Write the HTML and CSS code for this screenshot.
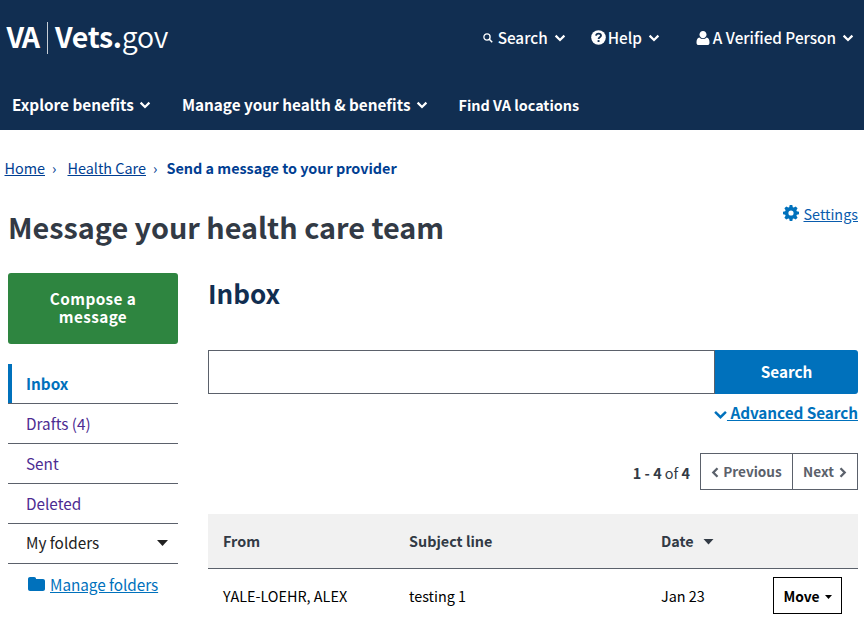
FILE: index.html
```html
<!DOCTYPE html>
<html lang="en">
<head>
<meta charset="utf-8">
<title>Message your health care team | Vets.gov</title>
<link rel="stylesheet" href="styles.css">
</head>
<body>
<svg class="defs" width="0" height="0">
  <symbol id="chevron" viewBox="0 0 12 8"><path d="M1.600 1.600 6 6l4.400-4.400" fill="none" stroke="currentColor" stroke-width="2.200"/></symbol>
</svg>
<header class="header">
  <div class="header-top">
    <a class="logo"><span class="logo-va">VA</span><span class="logo-vets">Vets.</span><span class="logo-gov">gov</span></a>
    <div class="tools">
      <a class="tool tool-search"><svg class="icon-search" viewBox="0 0 10 10"><circle cx="4" cy="4" r="3.100" fill="none" stroke="currentColor" stroke-width="1.300"/><path d="m6.300 6.300 2.900 2.900" stroke="currentColor" stroke-width="1.600"/></svg><span>Search</span><svg class="chev"><use href="#chevron"/></svg></a>
      <a class="tool tool-help"><svg class="icon-help" viewBox="0 0 15 15"><circle cx="7.500" cy="7.500" r="7.300" fill="currentColor"/><path d="M5 5.700C5.200 4.300 6.200 3.600 7.500 3.600c1.500 0 2.500.8 2.500 2 0 1.700-2.400 1.700-2.400 3.400" fill="none" stroke="#112e51" stroke-width="1.900"/><path d="M6.600 10.100h1.900v1.900H6.600z" fill="#112e51"/></svg><span>Help</span><svg class="chev"><use href="#chevron"/></svg></a>
      <a class="tool tool-user"><svg class="icon-user" viewBox="0 0 13 14"><path d="M6.500 0C8.500 0 10 1.600 10 3.600S8.500 7.300 6.500 7.300 3 5.600 3 3.600 4.500 0 6.500 0z" fill="currentColor"/><path d="M3 6.400c1 1 2.200 1.600 3.500 1.600S9 7.400 10 6.400c2.300.2 3 2.600 3 5.300 0 1.400-.9 2.300-2.200 2.300H2.200C.9 14 0 13.100 0 11.700 0 9 .7 6.600 3 6.400z" fill="currentColor"/></svg><span>A Verified Person</span><svg class="chev"><use href="#chevron"/></svg></a>
    </div>
  </div>
  <nav class="main-nav">
    <a class="nav-a"><span>Explore benefits</span><svg class="chev"><use href="#chevron"/></svg></a>
    <a class="nav-b"><span>Manage your health &amp; benefits</span><svg class="chev"><use href="#chevron"/></svg></a>
    <a class="nav-c"><span>Find VA locations</span></a>
  </nav>
</header>
<nav class="breadcrumb">
  <a class="crumb">Home</a><span class="sep">›</span><a class="crumb crumb-two">Health Care</a><span class="sep">›</span><strong class="crumb-now">Send a message to your provider</strong>
</nav>
<main>
  <div class="title-row">
    <h1>Message your health care team</h1>
    <a class="settings"><svg viewBox="0 0 16 16"><path d="M6.700 0h2.600l.5 2.200 1 .4 1.900-1.200 1.900 1.900-1.200 1.900.4 1 2.200.5v2.600l-2.200.5-.4 1 1.200 1.900-1.900 1.900-1.900-1.200-1 .4-.5 2.200H6.700l-.5-2.200-1-.4-1.900 1.200-1.900-1.900 1.200-1.900-.4-1L0 9.300V6.700l2.200-.5.4-1-1.200-1.900 1.900-1.900 1.900 1.200 1-.4zM8 5.400a2.600 2.600 0 1 0 0 5.200 2.600 2.600 0 0 0 0-5.200z" fill="currentColor" fill-rule="evenodd"/></svg><span>Settings</span></a>
  </div>
  <div class="columns">
    <aside>
      <button class="compose">Compose a<br>message</button>
      <ul class="folders">
        <li class="active"><span>Inbox</span></li>
        <li><span>Drafts (4)</span></li>
        <li><span>Sent</span></li>
        <li><span>Deleted</span></li>
        <li class="mine"><span>My folders</span><svg class="caret" viewBox="0 0 11 6"><path d="M0 0h11L5.500 6z" fill="currentColor"/></svg></li>
      </ul>
      <a class="manage"><svg viewBox="0 0 17 14"><path d="M2 0h4.200c1.100 0 1.900.8 1.900 1.900H15c1.100 0 2 .9 2 2V12c0 1.100-.9 2-2 2H2c-1.100 0-2-.9-2-2V2C0 .9.900 0 2 0z" fill="currentColor"/></svg><span>Manage folders</span></a>
    </aside>
    <section class="content">
      <h2>Inbox</h2>
      <form class="search"><input type="text" aria-label="Search"><button type="button"><span>Search</span></button></form>
      <div class="advanced"><svg class="chev" viewBox="0 0 12 8"><path d="M1 1.600 6 6.500l5-4.900" fill="none" stroke="currentColor" stroke-width="2.300"/></svg><a>&nbsp;Advanced Search</a></div>
      <div class="paging">
        <p><b>1 - 4</b> of <b>4</b></p>
        <div class="pager">
          <button class="prev"><svg viewBox="0 0 7 11"><path d="M6 1.200 1.800 5.500 6 9.800" fill="none" stroke="currentColor" stroke-width="2.300"/></svg><span>Previous</span></button>
          <button class="next"><span>Next</span><svg viewBox="0 0 7 11"><path d="m1 1.200 4.200 4.300L1 9.800" fill="none" stroke="currentColor" stroke-width="2.300"/></svg></button>
        </div>
      </div>
      <div class="table">
        <div class="row head"><span>From</span><span>Subject line</span><span class="date-head"><span>Date</span><svg class="caret" viewBox="0 0 11 6"><path d="M.5 0h10L5.500 5.500z" fill="currentColor"/></svg></span></div>
        <div class="row body"><span>YALE-LOEHR, ALEX</span><span>testing 1</span><span>Jan 23</span><button class="move"><span>Move</span><svg viewBox="0 0 7 4"><path d="M0 0h7L3.500 4z" fill="currentColor"/></svg></button></div>
      </div>
    </section>
  </div>
</main>
</body>
</html>
```
FILE: styles.css
```css
* { box-sizing: border-box; }
body {
  margin: 0;
  height: 618px;
  overflow: hidden;
  background: #fff;
  color: #212121;
  font: 15.3px/20px "Noto Sans CJK SC", "Open Sans", sans-serif;
  white-space: nowrap;
}
button, input { font: inherit; margin: 0; padding: 0; }
svg { display: block; flex: none; }
.defs { position: absolute; }
.chev { width: 12px; height: 8px; }

.header { height: 130px; background: #112e51; color: #fff; }
.header-top { display: flex; justify-content: space-between; height: 76px; padding: 22px 10px 0 6.500px; }
.logo { display: flex; height: 32px; font-size: 28.500px; line-height: 27px; }
.logo-va { width: 41.500px; border-right: 1px solid #c6cdd5; font-weight: 700; letter-spacing: -1.800px; }
.logo-vets { margin-left: 7px; font-weight: 700; letter-spacing: -0.300px; }
.logo-gov { font-weight: 350; letter-spacing: -0.300px; }
.tools { display: flex; padding-top: 4px; height: 26px; font-weight: 500; }
.tool { display: flex; align-items: center; }
.tool .chev { margin-left: 6px; margin-top: 1px; }
.icon-search { width: 10px; height: 10px; margin-right: 5px; margin-top: 2px; }
.tool-help { margin-left: 25px; }
.icon-help { width: 15px; height: 15px; margin-right: 2px; margin-top: 1px; }
.tool-user { margin-left: 36px; }
.icon-user { width: 14px; height: 14px; margin-right: 3px; margin-top: 1px; }

.main-nav { display: flex; align-items: flex-start; padding: 18px 0 0 12px; font-weight: 700; }
.main-nav a { display: flex; align-items: center; }
.main-nav .chev { margin: 2px 0 0 5px; }
.nav-b, .nav-c { margin-left: 31px; }
.main-nav .nav-c { padding-top: 1px; font-size: 14.400px; }

.breadcrumb { display: flex; height: 47.500px; padding: 27.500px 0 0 4.500px; color: #003e92; font-size: 14.400px; }
.crumb { text-decoration: underline; }
.sep { width: 8px; margin: 0 7.500px 0 7px; }
.crumb-two + .sep { margin-right: 5.500px; }
.crumb-now { letter-spacing: -0.010px; }

.title-row { display: flex; justify-content: space-between; height: 95.500px; padding: 31px 6px 0 8px; }
h1 { margin: -2px 0 0; color: #323a45; font-size: 28.800px; line-height: 40px; letter-spacing: -0.015px; }
.settings { display: flex; height: 20px; margin-top: -5px; color: #0071bc; font-size: 14.400px; }
.settings svg { width: 16px; height: 16px; margin: 1.500px 4.500px 0 0; }
.settings span { text-decoration: underline; color: #0a5cad; }

.columns { display: flex; gap: 30px; padding: 0 6px 0 8px; }
aside { width: 170px; }
.compose { display: block; width: 170px; height: 71px; padding-bottom: 3px; border: 0; border-radius: 3px; background: #2e8540; color: #fff; font-weight: 700; line-height: 18px; letter-spacing: 0.400px; }
.folders { margin: 20px 0 0; padding: 0; list-style: none; color: #4c2c92; }
.folders li { display: flex; align-items: center; height: 40px; padding: 0 0 2px 18px; border-bottom: 1px solid #5b616b; }
.folders .active { position: relative; color: #0071bc; font-weight: 700; }
.active::before { content: ""; position: absolute; left: 0; top: 0; width: 4px; height: 39px; background: #0071bc; }
.folders .mine { justify-content: space-between; padding: 0 10px 3px 18px; color: #212121; }
.caret { width: 11px; height: 6px; }
.mine .caret { margin-top: 1px; }
.manage { display: flex; padding: 10px 0 0 20px; color: #0071bc; }
.manage svg { width: 17px; height: 14px; margin: 3px 5px 0 0; }
.manage span { text-decoration: underline; letter-spacing: -0.040px; }

.content { width: 650px; }
h2 { margin: 1px 0 0; color: #112e51; font-size: 26px; line-height: 38px; }
.search { display: flex; height: 44px; margin-top: 38px; }
.search input { width: 507px; border: 1px solid #5b616b; background: #fff; outline: 0; }
.search button { width: 143px; padding-bottom: 2px; border: 0; border-radius: 0 3px 3px 0; background: #0071bc; color: #fff; font-weight: 700; }
.advanced { display: flex; justify-content: flex-end; margin-top: 8px; color: #0071bc; font-weight: 700; }
.advanced .chev { width: 13px; height: 9px; margin-top: 8px; }
.advanced a { text-decoration: underline; letter-spacing: -0.050px; }
.paging { display: flex; justify-content: flex-end; margin-top: 31px; color: #323a45; }
.paging p { margin: 10px 10px 0 0; font-size: 14.400px; }
.pager { display: flex; width: 158px; height: 37px; border: 1px solid #5b616b; }
.pager button { display: flex; align-items: center; justify-content: center; padding-bottom: 1px; border: 0; background: #fff; color: #5b616b; font-size: 13.600px; font-weight: 700; }
.pager svg { width: 8px; height: 11px; margin-top: 2px; }
.pager .prev { width: 92px; gap: 4px; border-right: 1px solid #5b616b; }
.pager .next { flex: 1; gap: 5px; }
.table { margin-top: 24px; }
.row { display: grid; grid-template-columns: 186px 252px 112px 1fr; align-items: center; padding: 0 0 0 15px; font-size: 14.400px; }
.head { height: 55px; background: #f1f1f1; border-bottom: 1px solid #5b616b; color: #323a45; font-weight: 700; }
.body { height: 54px; color: #000; }
.date-head { display: flex; align-items: center; gap: 9px; }
.date-head .caret { margin-top: 1px; }
.move { display: flex; align-items: center; justify-content: center; gap: 5px; width: 69px; height: 37px; margin-top: -1px; padding-top: 1px; border: 1px solid #000; background: #fff; color: #000; font-weight: 700; font-size: 13.800px; }
.move svg { width: 7px; height: 4px; margin-top: 2px; }
```
